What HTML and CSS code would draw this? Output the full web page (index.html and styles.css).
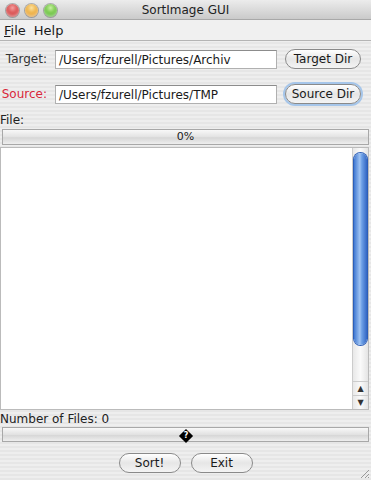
FILE: index.html
```html
<!DOCTYPE html>
<html lang="en">
<head>
  <meta charset="UTF-8">
  <title>SortImage GUI</title>
  <link rel="stylesheet" href="styles.css">
</head>
<body>
  <div class="window">
    <header class="titlebar">
      <div class="lights">
        <span class="light red"></span>
        <span class="light yellow"></span>
        <span class="light green"></span>
      </div>
      <div class="title">SortImage GUI</div>
    </header>

    <nav class="menubar">
      <span class="menu"><u>F</u>ile</span>
      <span class="menu">Help</span>
    </nav>

    <div class="dirs">
      <div class="dir-row">
        <label class="dir-label">Target:</label>
        <div class="field">/Users/fzurell/Pictures/Archiv</div>
        <button class="pill">Target Dir</button>
      </div>
      <div class="dir-row">
        <label class="dir-label source">Source:</label>
        <div class="field">/Users/fzurell/Pictures/TMP</div>
        <button class="pill focused">Source Dir</button>
      </div>
    </div>

    <div class="caption">File:</div>
    <div class="progress">0%</div>

    <div class="log">
      <div class="log-body"></div>
      <div class="scrollbar">
        <div class="track">
          <div class="thumb"></div>
        </div>
        <div class="arrow">&#9650;</div>
        <div class="arrow">&#9660;</div>
      </div>
    </div>

    <div class="caption count">Number of Files: 0</div>
    <div class="progress busy"><span class="diamond"><span>?</span></span></div>

    <div class="actions">
      <button class="pill">Sort!</button>
      <button class="pill">Exit</button>
    </div>

    <svg class="grip" width="12" height="12" viewBox="0 0 12 12">
      <path d="M11 3 L3 11 M11 7 L7 11 M11 10 L10 11" stroke="#999" stroke-width="1"/>
    </svg>
  </div>
</body>
</html>
```

FILE: styles.css
```css
body {
  margin: 0;
  font-family: 'DejaVu Sans', sans-serif;
  font-size: 12px;
  color: #1a1a1a;
}

.window {
  position: relative;
  width: 371px;
  height: 480px;
  display: flex;
  flex-direction: column;
  background: repeating-linear-gradient(#eeeeee 0 2px, #e6e6e6 2px 4px);
  overflow: hidden;
}

.titlebar {
  height: 20px;
  flex-shrink: 0;
  display: flex;
  align-items: center;
  justify-content: center;
  position: relative;
  background: linear-gradient(#ececec, #cacaca);
  border-bottom: 1px solid #a8a8a8;
  box-sizing: border-box;
}

.lights {
  position: absolute;
  left: 6px;
  top: 4px;
  display: flex;
  gap: 6px;
}

.light {
  width: 13px;
  height: 13px;
  border-radius: 50%;
  box-shadow: inset 0 -2px 3px rgba(255, 255, 255, 0.5), 0 0 0 1px rgba(0, 0, 0, 0.25);
}

.red { background: radial-gradient(circle at 50% 30%, #f4a0a0, #d23a3a 60%, #a01818); }
.yellow { background: radial-gradient(circle at 50% 30%, #fbe2a0, #eaa22a 60%, #b86f10); }
.green { background: radial-gradient(circle at 50% 30%, #c8f0a0, #5cbb2e 60%, #2d8a10); }

.title {
  font-size: 12px;
  color: #222;
}

.menubar {
  height: 21px;
  flex-shrink: 0;
  display: flex;
  align-items: center;
  gap: 8px;
  padding: 0 4px;
  font-size: 13px;
  border-bottom: 1px solid #b4b4b4;
  box-sizing: border-box;
  background: #f0f0f0;
}

.dirs {
  display: flex;
  flex-direction: column;
  gap: 15px;
  padding: 8px 0 0 0;
}

.dir-row {
  display: flex;
  align-items: center;
  height: 20px;
}

.dir-label {
  width: 47px;
  flex-shrink: 0;
  text-align: right;
  font-size: 12px;
  color: #333;
}

.dir-label.source { color: #d8263a; }

.field {
  margin-left: 8px;
  width: 222px;
  flex-shrink: 0;
  height: 19px;
  box-sizing: border-box;
  padding: 1px 3px;
  background: #fff;
  border: 1px solid #b0b0b0;
  border-top-color: #8c8c8c;
  font-size: 12px;
  line-height: 16px;
  white-space: nowrap;
}

.pill {
  margin-left: 8px;
  width: 76px;
  flex-shrink: 0;
  height: 20px;
  padding: 0;
  border-radius: 10px;
  border: 1px solid #8a8a8a;
  background: linear-gradient(#ffffff, #e6e6e6 50%, #f4f4f4);
  font-family: inherit;
  font-size: 12px;
  color: #1a1a1a;
  white-space: nowrap;
}

.pill.focused {
  box-shadow: 0 0 0 2px #a6c6ea;
}

.caption {
  font-size: 12px;
  padding: 10px 0 0 0;
  line-height: 12px;
  color: #222;
}

.caption.count {
  padding-top: 3px;
}

.progress {
  margin: 3px 2px 0;
  height: 16px;
  flex-shrink: 0;
  box-sizing: border-box;
  border: 1px solid #a8a8a8;
  background: linear-gradient(#f8f8f8, #e2e2e2 50%, #d6d6d6 55%, #eeeeee);
  text-align: center;
  font-size: 11px;
  line-height: 14px;
}

.progress.busy {
  margin-top: 2px;
  height: 15px;
  line-height: 13px;
}

.log {
  flex: 1;
  margin: 2px 2px 0 0;
  display: flex;
  background: #fff;
  border: 1px solid #bbb;
}

.log-body { flex: 1; }

.scrollbar {
  width: 15px;
  display: flex;
  flex-direction: column;
  background: linear-gradient(90deg, #e8e8e8, #fafafa 50%, #e4e4e4);
  border-left: 1px solid #ccc;
}

.track {
  flex: 1;
  padding: 5px 1px 36px;
  display: flex;
}

.thumb {
  flex: 1;
  border-radius: 7px;
  background: linear-gradient(90deg, #3f78d2, #9fc3f2 45%, #6da0e6 60%, #3266c4);
  box-shadow: 0 0 0 1px #2d5fb8;
}

.arrow {
  height: 13px;
  font-size: 8px;
  line-height: 13px;
  text-align: center;
  color: #333;
  border-top: 1px solid #ccc;
}

.diamond {
  display: inline-block;
  width: 10px;
  height: 10px;
  background: #000;
  transform: rotate(45deg);
  margin-top: 1px;
  font-size: 8px;
  font-weight: bold;
  line-height: 10px;
  color: #fff;
}

.diamond span {
  display: block;
  transform: rotate(-45deg);
}

.actions {
  display: flex;
  justify-content: center;
  gap: 10px;
  padding: 11px 0 7px;
}

.actions .pill {
  margin: 0;
  width: 62px;
}

.grip {
  position: absolute;
  right: 1px;
  bottom: 1px;
}
```
